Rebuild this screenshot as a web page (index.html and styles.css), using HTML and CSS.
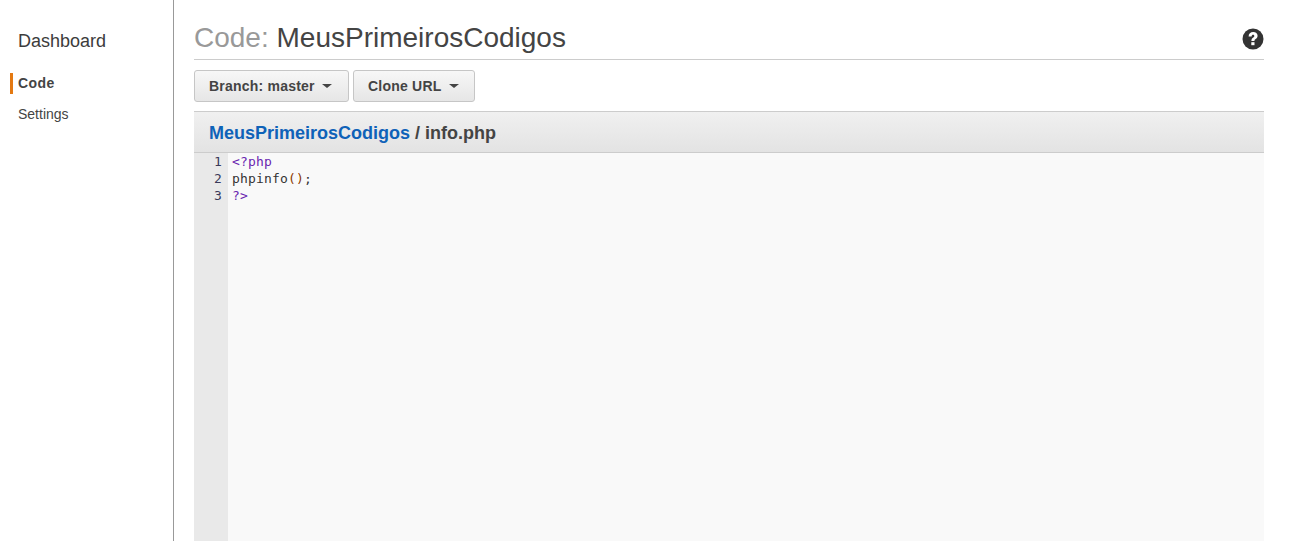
FILE: index.html
```html
<!DOCTYPE html>
<html lang="en">
<head>
<meta charset="utf-8">
<title>Code: MeusPrimeirosCodigos</title>
<link rel="stylesheet" href="styles.css">
</head>
<body>
<div class="app">
  <nav class="sidebar">
    <div class="dash">Dashboard</div>
    <ul class="nav">
      <li class="nav-item active">Code</li>
      <li class="nav-item">Settings</li>
    </ul>
  </nav>
  <main class="main">
    <header class="title-row">
      <h1 class="title"><span class="title-pre">Code:</span> MeusPrimeirosCodigos</h1>
      <svg class="help" viewBox="0 0 22 22" width="22" height="22" aria-label="Help">
        <circle cx="11" cy="11" r="10.5" fill="#333"/>
        <path d="M6.6 8.4c0-2.7 1.9-4.4 4.6-4.4 2.6 0 4.4 1.6 4.4 3.8 0 1.6-.8 2.5-2 3.3-.9.6-1.1.9-1.1 1.9H9.4c0-1.7.5-2.6 1.6-3.3.9-.6 1.3-1 1.3-1.7 0-.8-.5-1.2-1.2-1.2-.9 0-1.4.6-1.5 1.6H6.6z" fill="#fff"/>
        <rect x="9.3" y="14.2" width="3.2" height="3" fill="#fff"/>
      </svg>
    </header>
    <div class="toolbar">
      <button class="btn branch">Branch: master<span class="caret"></span></button>
      <button class="btn clone">Clone URL<span class="caret"></span></button>
    </div>
    <section class="panel">
      <div class="panel-head"><a class="repo">MeusPrimeirosCodigos</a> / info.php</div>
      <div class="code">
        <div class="gutter"><div>1</div><div>2</div><div>3</div></div>
        <pre class="src"><span class="kw">&lt;?php</span>
<span class="fn">phpinfo</span><span class="par">()</span><span class="fn">;</span>
<span class="kw">?&gt;</span></pre>
      </div>
    </section>
  </main>
</div>
</body>
</html>
```
FILE: styles.css
```css
* { box-sizing: border-box; }
html, body { margin: 0; padding: 0; background: #fff; }
body { font-family: "Liberation Sans", Arial, sans-serif; color: #444; height: 548px; overflow: hidden; }
.app { display: flex; height: 541px; }
.sidebar { width: 174px; flex: none; border-right: 1px solid #999; padding-top: 31px; }
.dash { font-size: 18px; line-height: 21px; color: #3c3c3c; padding-left: 18px; }
.nav { list-style: none; margin: 21px 0 0; padding: 0 0 0 10px; }
.nav-item { font-size: 14px; line-height: 21px; padding-left: 5px; border-left: 3px solid transparent; margin-bottom: 10px; color: #444; }
.nav-item.active { border-left-color: #e47911; font-weight: 700; letter-spacing: .4px; }
.main { width: 1070px; margin-left: 20px; display: flex; flex-direction: column; }
.title-row { height: 60px; border-bottom: 1px solid #ccc; display: flex; align-items: flex-start; justify-content: space-between; }
.title { margin: 20px 0 0; font-size: 28px; line-height: 35px; font-weight: 400; color: #444; }
.title-pre { color: #999; }
.help { margin-top: 28px; }
.toolbar { display: flex; gap: 4px; margin-top: 10px; height: 32px; }
.btn { height: 32px; padding: 0 14px; border: 1px solid #c6c6c6; border-radius: 3px; background: linear-gradient(#f7f7f7, #e6e6e6); font: 700 14px "Liberation Sans", Arial, sans-serif; letter-spacing: .22px; color: #444; display: flex; align-items: center; }
.branch { width: 155px; }
.clone { width: 122px; }
.caret { width: 0; height: 0; margin-left: 7px; border-left: 5px solid transparent; border-right: 5px solid transparent; border-top: 4px solid #444; }
.panel { flex: 1; margin-top: 9px; display: flex; flex-direction: column; min-height: 0; }
.panel-head { height: 42px; padding: 1px 0 0 15px; border-top: 1px solid #ccc; border-bottom: 1px solid #ccc; background: linear-gradient(#f0f0f0, #e3e3e3); font-size: 18px; line-height: 40px; font-weight: 700; color: #444; }
.repo { color: #0f62b8; }
.code { flex: 1; display: flex; background: #f9f9f9; font-family: "DejaVu Sans Mono", monospace; font-size: 13px; letter-spacing: .17px; line-height: 17px; min-height: 0; }
.gutter { width: 34px; background: #e9e9e9; text-align: right; padding-right: 6px; color: #3a3a5a; }
.src { margin: 0 0 0 4px; font: inherit; color: #333; }
.kw { color: #6a1fb0; }
.fn { color: #333; }
.par { color: #8a3a00; }
```
